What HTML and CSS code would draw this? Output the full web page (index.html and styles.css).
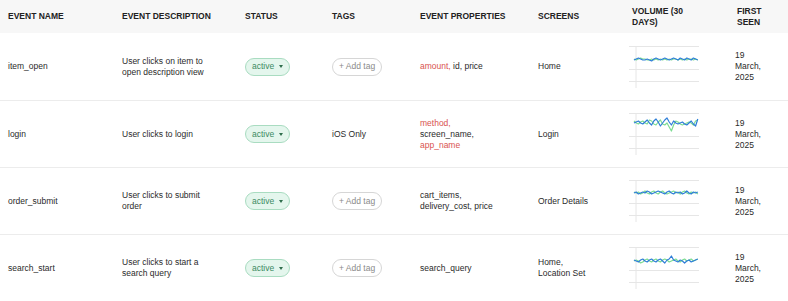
FILE: index.html
```html
<!DOCTYPE html>
<html lang="en">
  <head>
    <meta charset="UTF-8" />
    <meta name="viewport" content="width=device-width, initial-scale=1.0" />
    <title>Events</title>
    <link rel="stylesheet" href="styles.css">
  </head>
  <body>
    <table class="events">
      <colgroup>
        <col class="c-name" />
        <col class="c-desc" />
        <col class="c-status" />
        <col class="c-tags" />
        <col class="c-props" />
        <col class="c-screens" />
        <col class="c-volume" />
        <col class="c-seen" />
      </colgroup>
      <thead>
        <tr>
          <th>EVENT NAME</th>
          <th>EVENT DESCRIPTION</th>
          <th>STATUS</th>
          <th>TAGS</th>
          <th class="props">EVENT PROPERTIES</th>
          <th class="screens">SCREENS</th>
          <th class="volume">VOLUME (30 DAYS)</th>
          <th class="seen">FIRST SEEN</th>
        </tr>
      </thead>
      <tbody>
        <tr>
          <td>item_open</td>
          <td class="desc">User clicks on item to open description view</td>
          <td><span class="status">active <span class="caret"></span></span></td>
          <td><span class="add-tag">+ Add tag</span></td>
          <td class="props"><span class="hl">amount,</span> id, price</td>
          <td class="screens">Home</td>
          <td class="volume">
            <svg class="spark" width="70" height="42" viewBox="0 0 70 42">
              <line x1="7" y1="0" x2="7" y2="42" />
              <line x1="0" y1="0.5" x2="70" y2="0.5" />
              <line x1="0" y1="23.5" x2="70" y2="23.5" />
              <line x1="0" y1="35.5" x2="70" y2="35.5" />
              <polyline class="g" points="5,13 7.2,14 9.4,13 11.6,12 13.8,13 16,13 18.2,14 20.4,14 22.6,13 24.8,14 27,13 29.2,14 31.4,13 33.6,14 35.8,13 38,14 40.2,13 42.4,14 44.6,13 46.8,13 49,14 51.2,13 53.4,14 55.6,13 57.8,14 60,13 62.2,13 64.4,14 66.6,13 68.8,14" />
              <polyline class="b" points="5,14 7.2,13 9.4,12 11.6,13 13.8,14 16,14 18.2,13 20.4,14 22.6,15 24.8,13 27,12 29.2,13 31.4,14 33.6,13 35.8,12 38,13 40.2,14 42.4,13 44.6,12 46.8,13 49,14 51.2,12 53.4,13 55.6,14 57.8,12 60,13 62.2,14 64.4,12 66.6,13 68.8,14" />
            </svg>
          </td>
          <td class="seen">19 March, 2025</td>
        </tr>
        <tr>
          <td>login</td>
          <td class="desc">User clicks to login</td>
          <td><span class="status">active <span class="caret"></span></span></td>
          <td>iOS Only</td>
          <td class="props"><span class="hl">method,</span> screen_name, <span class="hl">app_name</span></td>
          <td class="screens">Login</td>
          <td class="volume">
            <svg class="spark" width="70" height="42" viewBox="0 0 70 42">
              <line x1="7" y1="0" x2="7" y2="42" />
              <line x1="0" y1="0.5" x2="70" y2="0.5" />
              <line x1="0" y1="23.5" x2="70" y2="23.5" />
              <line x1="0" y1="35.5" x2="70" y2="35.5" />
              <polyline class="g" points="5,8 7.2,10 9.4,11 11.6,9 13.8,8 16,10 18.2,11 20.4,7 22.6,8 24.8,11 27,12 29.2,9 31.4,7 33.6,11 35.8,12 38,10 40.2,14 42.4,18 44.6,12 46.8,8 49,9 51.2,11 53.4,12 55.6,11 57.8,10 60,9 62.2,10 64.4,12 66.6,8 68.8,7" />
              <polyline class="b" points="5,10 7.2,9 9.4,8 11.6,10 13.8,11 16,9 18.2,7 20.4,10 22.6,12 24.8,8 27,6 29.2,9 31.4,13 33.6,10 35.8,7 38,5 40.2,9 42.4,12 44.6,8 46.8,10 49,11 51.2,10 53.4,9 55.6,11 57.8,12 60,10 62.2,8 64.4,11 66.6,13 68.8,6" />
            </svg>
          </td>
          <td class="seen">19 March, 2025</td>
        </tr>
        <tr>
          <td>order_submit</td>
          <td class="desc">User clicks to submit order</td>
          <td><span class="status">active <span class="caret"></span></span></td>
          <td><span class="add-tag">+ Add tag</span></td>
          <td class="props">cart_items, delivery_cost, price</td>
          <td class="screens">Order Details</td>
          <td class="volume">
            <svg class="spark" width="70" height="42" viewBox="0 0 70 42">
              <line x1="7" y1="0" x2="7" y2="42" />
              <line x1="0" y1="0.5" x2="70" y2="0.5" />
              <line x1="0" y1="23.5" x2="70" y2="23.5" />
              <line x1="0" y1="35.5" x2="70" y2="35.5" />
              <polyline class="g" points="5,12 7.2,13 9.4,12 11.6,14 13.8,13 16,11 18.2,13 20.4,14 22.6,12 24.8,11 27,13 29.2,14 31.4,12 33.6,11 35.8,13 38,14 40.2,13 42.4,12 44.6,11 46.8,13 49,12 51.2,14 53.4,12 55.6,11 57.8,13 60,14 62.2,12 64.4,13 66.6,12 68.8,14" />
              <polyline class="b" points="5,13 7.2,12 9.4,14 11.6,13 13.8,12 16,13 18.2,11 20.4,12 22.6,14 24.8,13 27,12 29.2,11 31.4,12 33.6,13 35.8,14 38,12 40.2,11 42.4,13 44.6,14 46.8,12 49,13 51.2,12 53.4,14 55.6,13 57.8,11 60,13 62.2,14 64.4,12 66.6,13 68.8,12" />
            </svg>
          </td>
          <td class="seen">19 March, 2025</td>
        </tr>
        <tr>
          <td>search_start</td>
          <td class="desc">User clicks to start a search query</td>
          <td><span class="status">active <span class="caret"></span></span></td>
          <td><span class="add-tag">+ Add tag</span></td>
          <td class="props">search_query</td>
          <td class="screens">Home, Location Set</td>
          <td class="volume">
            <svg class="spark" width="70" height="42" viewBox="0 0 70 42">
              <line x1="7" y1="0" x2="7" y2="42" />
              <line x1="0" y1="0.5" x2="70" y2="0.5" />
              <line x1="0" y1="23.5" x2="70" y2="23.5" />
              <line x1="0" y1="35.5" x2="70" y2="35.5" />
              <polyline class="g" points="5,14 7.2,13 9.4,14 11.6,16 13.8,15 16,13 18.2,12 20.4,14 22.6,15 24.8,13 27,12 29.2,14 31.4,15 33.6,13 35.8,12 38,13 40.2,15 42.4,14 44.6,13 46.8,12 49,14 51.2,15 53.4,13 55.6,12 57.8,14 60,13 62.2,12 64.4,14 66.6,13 68.8,12" />
              <polyline class="b" points="5,13 7.2,14 9.4,15 11.6,13 13.8,12 16,14 18.2,15 20.4,13 22.6,12 24.8,14 27,15 29.2,13 31.4,12 33.6,14 35.8,16 38,13 40.2,12 42.4,9 44.6,13 46.8,14 49,15 51.2,13 53.4,14 55.6,16 57.8,14 60,13 62.2,15 64.4,14 66.6,13 68.8,12" />
            </svg>
          </td>
          <td class="seen">19 March, 2025</td>
        </tr>
      </tbody>
    </table>
  </body>
</html>
```

FILE: styles.css
```css
body {
  margin: 0;
  padding: 0;
  background-color: #fff;
  color: #2a2a2a;
  font-family: "Liberation Sans", Arial, sans-serif;
  font-size: 8.5px;
}
.events {
  width: 788px;
  border-collapse: collapse;
  table-layout: fixed;
}
.c-name { width: 114px; }
.c-desc { width: 123px; }
.c-status { width: 87px; }
.c-tags { width: 88px; }
.c-props { width: 118px; }
.c-screens { width: 94px; }
.c-volume { width: 103px; }
.c-seen { width: 61px; }

th {
  background-color: #f7f7f7;
  height: 33px;
  padding: 0 8px;
  text-align: left;
  font-weight: 700;
  line-height: 11px;
  color: #222;
  vertical-align: middle;
}
td {
  height: 66px;
  padding: 0 8px;
  line-height: 11px;
  border-top: 1px solid #ececec;
  vertical-align: middle;
}
tbody tr:first-child td {
  border-top: none;
  height: 67px;
}
.desc {
  padding-right: 25px;
}
th.props {
  padding-right: 22px;
}
td.props {
  padding-right: 32px;
}
th.screens {
  padding-right: 21px;
}
td.screens {
  padding-right: 30px;
}
th.volume {
  padding-right: 25px;
}
td.volume {
  padding: 0 20px 0 5px;
}
.seen {
  padding-right: 22px;
}
th.seen {
  padding-left: 10px;
}
.hl {
  color: #d9534f;
}
.status {
  display: inline-flex;
  align-items: center;
  gap: 5px;
  height: 18px;
  padding: 0 6px;
  border: 1px solid #a9dcc1;
  border-radius: 10px;
  background-color: #e4f6ed;
  color: #3d8a63;
  box-sizing: border-box;
}
.caret {
  width: 0;
  height: 0;
  border-left: 2.5px solid transparent;
  border-right: 2.5px solid transparent;
  border-top: 3px solid #2f6d4c;
}
.add-tag {
  display: inline-flex;
  align-items: center;
  height: 18px;
  padding: 0 6px;
  border: 1px solid #d6d6d6;
  border-radius: 10px;
  color: #8a8a8a;
  box-sizing: border-box;
}
.spark {
  display: block;
}
.spark line {
  stroke: #e6e6e6;
  stroke-width: 1;
}
.spark polyline {
  fill: none;
  stroke-width: 1.2;
  stroke-linejoin: round;
}
.spark .g {
  stroke: #7ddc92;
}
.spark .b {
  stroke: #2f7ed8;
}
```
